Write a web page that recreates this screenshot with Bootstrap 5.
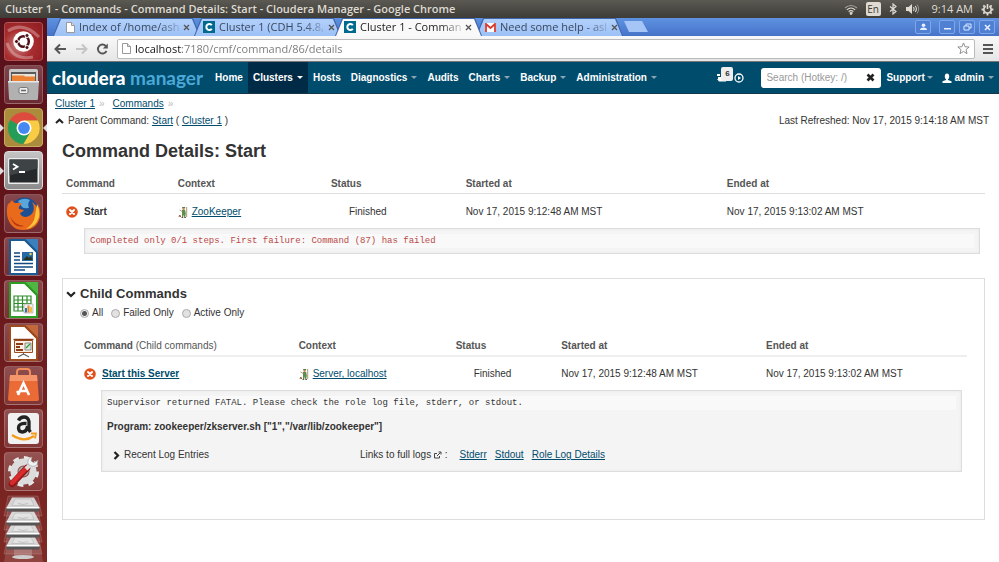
<!DOCTYPE html>
<html lang="en">
<head>
<meta charset="utf-8">
<meta name="viewport" content="width=device-width, initial-scale=1">
<title>Cluster 1 - Commands - Command Details: Start - Cloudera Manager</title>
<link href="https://cdn.jsdelivr.net/npm/bootstrap@5.3.0/dist/css/bootstrap.min.css" rel="stylesheet">
<style>
  :root { --ui: "Open Sans", "Noto Sans", sans-serif; --page: "Liberation Sans", Arial, sans-serif; --mono: "Liberation Mono", "Courier New", monospace; }
  body { font-family: var(--page); font-size: 10px; line-height: 14px; color: #333; background: #fff; }
  svg { display: block; flex: none; }
  button { font: inherit; }
  .plain-btn { border: 0; background: none; padding: 0; color: inherit; display: flex; }

  .sys-bar { height: 18px; padding: 0 5px; background: linear-gradient(#5b5952, #3d3c37); color: #dfdbd2; font-family: var(--ui); font-size: 11px; }
  .sys-title { font-weight: 600; }
  .sys-lang { background: #dfdbd2; color: #3d3c37; border-radius: 2px; width: 15px; height: 14px; font-size: 10px; }

  .launcher { width: 47px; padding: 4px 4px 0; gap: 4px; background: linear-gradient(#58101a, #66161b 45%, #7f2924); flex: none; }
  .tile { position: relative; width: 39px; height: 39px; border: 1px solid rgba(255,255,255,.2); border-radius: 4px; background: linear-gradient(rgba(255,255,255,.22), rgba(255,255,255,.1)); justify-content: center; align-items: center; flex: none; }
  .tile-ubuntu { background: radial-gradient(circle at 35% 60%, #c98080, #a92d2f 45%, #8c1c20); }
  .tile-chrome { background: #ab8b3c; border-color: #c9ac62; }
  .tile-term { background: linear-gradient(#c5c5c5, #8b8b8b); border-color: #ddd; }
  .run-left::before, .run-right::after { content: ""; position: absolute; top: 15px; border: 4px solid transparent; }
  .run-left::before { left: -5px; border-left-color: #ddd; border-right: 0; }
  .run-right::after { right: -5px; border-right-color: #ddd; border-left: 0; }
  .stack { margin: -3px -1px 0; }

  .tab-strip { height: 18px; padding-left: 6px; background: linear-gradient(#5e92e0, #4673c9); color: #3b475c; font-family: var(--ui); font-size: 11px; }
  .b-tab { position: relative; width: 147px; height: 18px; margin-right: -6px; padding: 0 11px 0 9px; z-index: 1; }
  .b-tab::before, .b-tab::after, .new-tab { clip-path: polygon(7px 0, calc(100% - 7px) 0, 100% 100%, 0 100%); }
  .b-tab::before, .b-tab::after { content: ""; position: absolute; z-index: -1; inset: 0; background: #3e66ad; }
  .b-tab::after { inset: 1px 1px 0; background: linear-gradient(#b2d0fb, #9dc1f6); }
  .b-tab.on { z-index: 2; color: #222; }
  .b-tab.on::after { background: #f9f9f9; }
  .b-tab span { white-space: nowrap; -webkit-mask-image: linear-gradient(90deg, #000 80%, rgba(0,0,0,.2)); mask-image: linear-gradient(90deg, #000 80%, rgba(0,0,0,.2)); }
  .new-tab { width: 24px; height: 11px; margin: 3px 0 0 7px; background: #a5c5f7; border: 0; clip-path: polygon(0 0, 18px 0, 100% 100%, 5px 100%); }
  .win-btn { width: 16px; height: 14px; border: 1px solid #7fa6e6; border-radius: 2px; background: #5080d4; padding: 0; display: flex; align-items: center; justify-content: center; }

  .tool-bar { height: 26px; padding: 0 6px 0 7px; background: linear-gradient(#f8f8f8, #e6e6e6); border-bottom: 1px solid #777; color: #555; }
  .url-box { height: 20px; border: 1px solid #bbb; border-radius: 2px; background: #fff; padding: 0 4px; }
  .url-box input { border: 0; outline: 0; padding: 0; height: 18px; font: 11px var(--ui); color: transparent; background: linear-gradient(90deg, #111 47px, #777 47px); -webkit-background-clip: text; background-clip: text; }

  .cm-nav { height: 32px; background: #004c6d; border-bottom: 1px solid #14384a; color: #fff; padding: 0 5px; font-weight: 700; }
  .cm-logo { font: 900 19px/28px Lato, sans-serif; color: #fff; text-decoration: none; margin-right: 7px; }
  .cm-logo span { color: #4ba9d8; font-weight: 700; }
  .cm-link { display: flex; align-items: center; gap: 4px; height: 31px; padding: 0 5px; color: #fff; text-decoration: none; }
  .cm-link.on { background: #002b46; }
  .cm-link.drop::after { content: ""; border: 3px solid transparent; border-top-color: #8aa6b4; border-bottom: 0; }
  .cm-link.on::after { border-top-color: #fff !important; }
  .tight.drop { gap: 2px; }
  .cm-search { width: 120px; height: 20px; background: #fff; border-radius: 3px; padding: 0 6px 0 5px; }
  .cm-search input { border: 0; outline: 0; padding: 0; min-width: 0; font: 10px var(--page); }
  .cm-search input::placeholder { color: #999; opacity: 1; }
  .cm-count { left: 5px; top: -2px; width: 12px; height: 14px; background: #eee; color: #333; border-radius: 2px; font-size: 8px; line-height: 14px; text-align: center; }

  .cm-main a { color: #004c6d; }
  .crumb-sep { color: #bbb; }
  .cm-main { padding: 1px 14px 0 15px; }
  .crumbs, .parent { margin-left: -7px; line-height: 17px; }
  .parent { margin-right: -4px; }
  h1 { font-size: 18px; line-height: 22px; font-weight: 700; margin: 11px 0 12px; }
  h2 { font-size: 13px; line-height: 16px; font-weight: 700; margin: 0; }
  .cmd-table { width: 100%; table-layout: fixed; margin: 0; }
  .cmd-table th { color: #555; padding: 3px 4px 2px; border-bottom: 1px solid #ddd; }
  .cmd-table td { padding: 11px 4px 9px; }
  .cmd-table td.state { padding-left: 22px; }
  .cmd-table td.detail { padding: 0 5px 0 22px; }
  .name-cell { gap: 6px; }
  .o1 { width: 12.1%; } .o2 { width: 16.6%; } .o3 { width: 14.6%; } .o4 { width: 28.3%; }
  .i1 { width: 24.2%; } .i2 { width: 17.7%; } .i3 { width: 11.9%; } .i4 { width: 23.1%; }
  .msg { background: #f4f4f4; border: 1px solid #ddd; padding: 5px; box-shadow: inset 0 0 3px rgba(0,0,0,.06); }
  .msg pre { font: 9px/14px var(--mono); margin: 0; background: #f9f9f9; overflow: hidden; color: #333; }
  .msg pre.err { color: #b94a48; }
  .program { margin-top: 10px; }
  .child { border: 1px solid #ddd; margin-top: 24px; padding: 7px 17px 47px; }
  .child-head { margin-left: -14px; }
  .child .cmd-table th { border-bottom: 2px solid #eee; }
  .child .cmd-table td { padding-top: 10px; }
  .child .cmd-table td.detail { padding-top: 0; padding-left: 21px; }
  .filters { gap: 8px; margin: 4px 0 16px; }
  .filters input { appearance: none; width: 9px; height: 9px; margin: 0; border: 1px solid #aaa; border-radius: 50%; background: #e2e2e2; }
  .filters input:checked { background: radial-gradient(#555 0 2px, #eee 3px); }
  .filters label { display: flex; align-items: center; gap: 3px; }
  .logs { padding: 14px 8px 4px 6px; }
  .logs > :first-child { width: 247px; }
</style>
</head>
<body>
<svg width="0" height="0" class="position-absolute" aria-hidden="true">
  <symbol id="fail" viewBox="0 0 12 12"><circle cx="6" cy="6" r="5.8" fill="#e3501c"/><path d="M4 4l4 4M8 4l-4 4" stroke="#fff" stroke-width="2" stroke-linecap="round"/></symbol>
  <symbol id="keeper" viewBox="0 0 10 12"><path d="M4 4h3.200l.6 3.500-.5 3.500H6.200L5.800 8.500l-.6 2.500H4z" fill="#5d8f4a"/><circle cx="5.600" cy="2.700" r="1.300" fill="#b98a5b"/><path d="M4.200 1.500h3" stroke="#4c6b35" stroke-width=".9"/><path d="M8.700 1v10" stroke="#8a6a45" stroke-width=".7"/><path d="M1.500 4l2.700 1.500" stroke="#a98a65" stroke-width=".8"/><path d="M1 11l.8-2 1 2" stroke="#a0522d" fill="none"/><path d="M3.500 11.500h1.700M6.200 11.500H8" stroke="#333" stroke-width=".8"/></symbol>
  <symbol id="sheet" viewBox="0 0 9 11"><path d="M.5.5h5l3 3v7h-8z" fill="#fff" stroke="#999"/><path d="M5.500.5v3h3" fill="#ddd" stroke="#999"/></symbol>
  <symbol id="close" viewBox="0 0 7 7"><path d="M1 1l5 5M6 1L1 6" stroke="#555" stroke-width="1.300"/></symbol>
  <symbol id="cfav" viewBox="0 0 12 12"><path fill="#006a8e" d="M0 0h12v12H0z"/><path d="M8.800 4.300A3 3 0 1 0 8.800 7.700" fill="none" stroke="#fff" stroke-width="2"/></symbol>
  <symbol id="disk" viewBox="0 0 40 22"><path d="M5 1h30l4 20H1z" fill="#fff" fill-opacity=".1" stroke="#fff" stroke-opacity=".15"/><path d="M9 2.500h22l5.500 10h-33z" fill="#d4d4d4"/><path d="M12 4h16l3 6.500H9z" fill="#dfdfdf" stroke="#b4b4b4" stroke-width=".6"/><path d="M15 8.500q5 2 10 0" stroke="#aaa" fill="none" stroke-width=".6"/><path d="M3.500 12.500h33v3l-1 1h-31l-1-1z" fill="#555"/><path d="M3.500 12h33v1.500h-33z" fill="#fff"/></symbol>
</svg>

<div class="d-flex flex-column min-vh-100">
  <header class="sys-bar d-flex align-items-center justify-content-between">
    <div class="sys-title">Cluster 1 - Commands - Command Details: Start - Cloudera Manager - Google Chrome</div>
    <div class="d-flex align-items-center">
      <svg class="me-2" width="14" height="11" viewBox="0 0 14 11" fill="none" stroke="#dfdbd2" stroke-width="1.100"><path d="M1 4Q7-1 13 4" opacity=".6"/><path d="M2.800 5.800Q7 2.200 11.200 5.800M4.600 7.600Q7 5.600 9.400 7.600"/><path d="M5.800 9L7 10.500 8.200 9Q7 8 5.800 9" fill="#dfdbd2"/></svg>
      <span class="sys-lang d-flex align-items-center justify-content-center me-2">En</span>
      <svg class="me-2" width="8" height="12" viewBox="0 0 8 12" fill="none" stroke="#dfdbd2" stroke-width="1.200"><path d="M1 3.500l6 5L4 11V1l3 2.500-6 5"/></svg>
      <svg class="me-2" width="15" height="12" viewBox="0 0 15 12"><path d="M1 4h2.500L7 1v10L3.500 8H1z" fill="#dfdbd2"/><path d="M8.500 4q1.400 2 0 4M10.300 3q2.200 3 0 6" fill="none" stroke="#dfdbd2" stroke-width="1.100"/><path d="M12 1.500q3.400 4.500 0 9" fill="none" stroke="#dfdbd2" opacity=".5"/></svg>
      <span class="mx-1">9:14 AM</span>
      <svg class="ms-1" width="13" height="13" viewBox="0 0 13 13" fill="none" stroke="#dfdbd2"><path d="M4.800 3.200a3.700 3.700 0 1 0 3.400 0" stroke-width="1.700"/><path d="M6.500 1v5" stroke-width="1.600"/><path d="M2.300 2.300l1.200 1.200M10.700 2.300L9.500 3.500M.6 6.500h1.700M12.400 6.500h-1.700M2.300 10.700l1.200-1.200M10.700 10.700L9.500 9.500M6.500 12.500v-2" stroke-width="1.800"/></svg>
    </div>
  </header>

  <div class="d-flex flex-grow-1">
    <aside class="launcher d-flex flex-column" aria-label="Launcher">
      <button class="plain-btn tile tile-ubuntu" aria-label="Search"><svg width="37" height="37" viewBox="0 0 37 37"><path d="M3 8Q18-2 34 14M2 20Q8 38 28 34" fill="none" stroke="#fff" stroke-opacity=".3" stroke-width="3"/><circle cx="18.500" cy="18.500" r="10.300" fill="#fff"/><circle cx="18.500" cy="18.500" r="5.300" fill="none" stroke="#4f1017" stroke-width="2.500"/><path d="M18.500 18.500L9 18.500M18.500 18.500l5-8.500M18.500 18.500l5 8.500" stroke="#fff" stroke-width="1.300"/><g fill="#4f1017" stroke="#fff" stroke-width=".9"><circle cx="11.500" cy="18.500" r="2"/><circle cx="22" cy="12.500" r="2"/><circle cx="22" cy="24.500" r="2"/></g><circle cx="18.500" cy="18.500" r="3.600" fill="#fff"/></svg></button>
      <button class="plain-btn tile" aria-label="Files"><svg width="37" height="37" viewBox="0 0 37 37"><rect x="4" y="3" width="29" height="31" rx="2" fill="#c9c9c9"/><path d="M6 6h25v9H6z" fill="#5a5a5a"/><path d="M7 8h23v7H7z" fill="#e9e4da"/><path d="M7 9.500h12l1 1h10V15H7z" fill="#ee8233"/><path d="M3 15h31l-1 17q0 2-2 2H6q-2 0-2-2z" fill="#b1b1b1"/><path d="M3 15h31v1.500H3z" fill="#e8e8e8"/><rect x="14" y="21.500" width="9" height="6" rx="1.500" fill="#eee" stroke="#777"/><path d="M16 24.500h5" stroke="#666" stroke-width="1.500"/></svg></button>
      <button class="plain-btn tile tile-chrome run-left run-right" aria-label="Chrome"><svg width="34" height="34" viewBox="0 0 34 34"><path d="M17 17L3.100 9A16 16 0 0 1 30.900 9.500H17z" fill="#dd4b3e"/><path d="M17 17L3.100 9A16 16 0 0 0 16.500 33L23.500 21z" fill="#239d58"/><path d="M17 9.500h13.900A16 16 0 0 1 16.500 33L23.500 21z" fill="#f9cc45"/><circle cx="17" cy="17" r="7.500" fill="#fff"/><circle cx="17" cy="17" r="5.900" fill="#4688f1"/></svg></button>
      <button class="plain-btn tile tile-term run-left" aria-label="Terminal"><svg width="37" height="37" viewBox="0 0 37 37"><rect x="3" y="6" width="31" height="26" rx="1.500" fill="#eee"/><rect x="4.500" y="7.500" width="28" height="23" fill="#25292b"/><path d="M4.500 7.500h28v9l-28 7z" fill="#3e4345"/><path d="M8 12l4.500 2.700L8 17.500M14 20h6" fill="none" stroke="#fff" stroke-width="1.800"/></svg></button>
      <button class="plain-btn tile" aria-label="Firefox"><svg width="35" height="35" viewBox="0 0 35 35"><circle cx="18.500" cy="15.500" r="14" fill="#1c4f94"/><path d="M12 5q6-4 12-1-3 4-1 8-5 1-7-1z" fill="#57a7dc"/><path d="M2 8Q4 7 6 4q1 3 4 3 4-1 6 1-4 2-3 5l5 1q-1 2-4 3 1 4 6 4 5-1 7-5 2-5-1-10 5 3 5 8 2-2 1-6 3 6 2 13-3 13-17 13Q5 34 1.500 21 0 14 2 8z" fill="#ea6a1c"/><path d="M31 8q3 6 2 13-3 10-13 12 8-5 9-13z" fill="#fdc63a"/><path d="M4 20q4 9 14 10-10 3-14-10z" fill="#b93415"/></svg></button>
      <button class="plain-btn tile" aria-label="Writer"><svg width="31" height="36" viewBox="0 0 31 36"><path d="M2 1h15l12 12v22H2z" fill="#fff" stroke="#1a5a92" stroke-width="2"/><path d="M17 0h13v13z" fill="#3b80bd"/><path d="M17 1l12 12" stroke="#1a5a92" stroke-width="2"/><path d="M6 14h6M6 17.500h6M6 21h6M6 24.500h19M6 28h19M6 31h11" stroke="#104a80" stroke-width="1.700"/><path d="M14 13h11v9H14z" fill="#256aa5"/><path d="M15 21l4-4 2 2 2-2 1.500 4z" fill="#26341f"/><circle cx="22.500" cy="15" r="1.200" fill="#f2d552"/></svg></button>
      <button class="plain-btn tile" aria-label="Calc"><svg width="31" height="36" viewBox="0 0 31 36"><path d="M2 1h15l12 12v22H2z" fill="#fff" stroke="#2c9c22" stroke-width="2"/><path d="M17 0h13v13z" fill="#4fb643"/><path d="M17 1l12 12" stroke="#2c9c22" stroke-width="2"/><path d="M6 14h17v15H6zM6 18h17M6 21.500h17M6 25h17M10 14v15M14.500 14v15M19 14v15" fill="none" stroke="#2c8c28" stroke-width="1.200"/><path d="M16 22h9v9h-9z" fill="#eee" stroke="#aaa" stroke-width=".7"/><path d="M17 26h2v4.500h-2z" fill="#2c73b3"/><path d="M19.500 23.500h2v7h-2z" fill="#e8872a"/><path d="M22 25h2v5.500h-2z" fill="#f0c040"/></svg></button>
      <button class="plain-btn tile" aria-label="Impress"><svg width="31" height="36" viewBox="0 0 31 36"><path d="M2 1h15l12 12v22H2z" fill="#fff" stroke="#9c4a1e" stroke-width="2"/><path d="M17 0h13v13z" fill="#c2683a"/><path d="M17 1l12 12" stroke="#9c4a1e" stroke-width="2"/><path d="M6.500 15.500h18v12h-18z" fill="#fbeee4" stroke="#a04e20"/><path d="M5.500 14.500h20" stroke="#8a3c14" stroke-width="1.500"/><path d="M8 19h7M8 22h4M8 25h7" stroke="#8a3c14" stroke-width="2"/><path d="M17 18h6v7h-6z" fill="#dfeadb" stroke="#777" stroke-width=".8"/><path d="M18 23l4-4" stroke="#2f9a3b" stroke-width="1.300"/><path d="M15.500 28v2M10 32l5.500-3 5.500 3" stroke="#666" stroke-width="1.200" fill="none"/></svg></button>
      <button class="plain-btn tile" aria-label="Software Center"><svg width="35" height="37" viewBox="0 0 35 37"><path d="M11 11V5q0-3 3-3h7q3 0 3 3v6" fill="none" stroke="#f08c5a" stroke-width="2"/><path d="M4 8h27l2 24q0 2-2 2H4q-2 0-2-2z" fill="#ea6b35"/><path d="M4 8h27l.5 6H3.500z" fill="#f4956a"/><path d="M12 28l5.500-12L23 28M14 24h7M10.500 25h3" fill="none" stroke="#fff" stroke-width="2.600"/></svg></button>
      <button class="plain-btn tile" aria-label="Amazon"><svg width="33" height="33" viewBox="0 0 33 33"><rect x="1" y="1" width="31" height="31" rx="3" fill="#f1f1f1"/><path d="M11.500 8.500Q13 5 17 5t5 4.500V18l1.500 2M19.500 11.500q-8-.5-8 4.500 0 4 4 4 4.500-.5 5-6" fill="none" stroke="#222" stroke-width="3.300"/><path d="M5 23q12 8 22 1" fill="none" stroke="#f49b1c" stroke-width="2.200"/><path d="M24 21.500h5l-1 5" fill="none" stroke="#f49b1c" stroke-width="1.800"/></svg></button>
      <button class="plain-btn tile" aria-label="System Settings"><svg width="37" height="37" viewBox="0 0 37 37"><circle cx="18.500" cy="18.500" r="13.500" fill="none" stroke="#e6e6e6" stroke-width="4" stroke-dasharray="5.600 5"/><circle cx="18.500" cy="18.500" r="9.500" fill="none" stroke="#dcdcdc" stroke-width="7"/><circle cx="18.500" cy="18.500" r="5" fill="#aaa"/><path d="M7 31L22 15" stroke="#8e1518" stroke-width="6.500" stroke-linecap="round"/><path d="M7 30L21 15.500" stroke="#d92b2b" stroke-width="4.500" stroke-linecap="round"/><path d="M21 16l5-5" stroke="#ddd" stroke-width="4"/><path d="M27 4q-5 1-4 7 4 4 9 1l1-5-4 3-3-2z" fill="#f2f2f2" stroke="#999" stroke-width=".6"/></svg></button>
      <div class="stack d-flex flex-column flex-grow-1">
        <svg width="41" height="70" viewBox="0 0 41 70"><path d="M4 52h33l3 18H1z" fill="#fff" opacity=".13"/><path d="M11 54h18v10H11z" fill="#fff" opacity=".2"/><ellipse cx="20" cy="65" rx="11" ry="2" fill="#ccc"/><use href="#disk" y="41" width="40" height="22"/><use href="#disk" y="29" width="40" height="22"/><use href="#disk" y="17" width="40" height="22"/><use href="#disk" y="3" width="40" height="22"/></svg>
      </div>
    </aside>

    <div class="flex-grow-1 d-flex flex-column">
      <div class="tab-strip d-flex">
        <div class="b-tab d-flex align-items-center gap-1"><svg class="ms-1" width="9" height="11"><use href="#sheet"/></svg><span>Index of /home/ash</span><button class="plain-btn ms-auto" aria-label="Close tab"><svg width="7" height="7"><use href="#close"/></svg></button></div>
        <div class="b-tab d-flex align-items-center gap-1"><svg width="12" height="12"><use href="#cfav"/></svg><span>Cluster 1 (CDH 5.4.8,</span><button class="plain-btn ms-auto" aria-label="Close tab"><svg width="7" height="7"><use href="#close"/></svg></button></div>
        <div class="b-tab on d-flex align-items-center gap-1"><svg width="12" height="12"><use href="#cfav"/></svg><span>Cluster 1 - Comman</span><button class="plain-btn ms-auto" aria-label="Close tab"><svg width="7" height="7"><use href="#close"/></svg></button></div>
        <div class="b-tab d-flex align-items-center gap-1"><svg width="11" height="9" viewBox="0 0 11 9"><path fill="#fff" d="M0 0h11v9H0z"/><path d="M1 9V1l4.500 4L10 1v8" fill="none" stroke="#d93a2f" stroke-width="1.800"/></svg><span>Need some help - asl</span><button class="plain-btn ms-auto" aria-label="Close tab"><svg width="7" height="7"><use href="#close"/></svg></button></div>
        <button class="new-tab" aria-label="New tab"></button>
        <div class="d-flex ms-auto me-1 gap-1 align-items-center">
          <button class="win-btn me-1" aria-label="Profile"><svg width="9" height="8" viewBox="0 0 9 8" fill="#e8f0ff"><circle cx="4.500" cy="2.300" r="1.800"/><path d="M1 7q0-2.500 3.500-2.500T8 7z"/></svg></button>
          <button class="win-btn" aria-label="Minimize"><svg width="7" height="7"><path d="M0 4h7v1.500H0z" fill="#e8f0ff"/></svg></button>
          <button class="win-btn" aria-label="Restore"><svg width="9" height="8" viewBox="0 0 9 8" fill="none" stroke="#dce8ff"><path d="M3 3V1h5v4H6M1 3h5v4H1z"/></svg></button>
          <button class="win-btn" aria-label="Close"><svg width="7" height="7" viewBox="0 0 7 7"><path d="M1 1l5 5M6 1L1 6" stroke="#e8f0ff" stroke-width="1.500"/></svg></button>
        </div>
      </div>

      <div class="tool-bar d-flex align-items-center">
        <div class="d-flex gap-2 me-2">
          <button class="plain-btn" aria-label="Back"><svg width="13" height="12" viewBox="0 0 13 12"><path d="M6 1.500L1.500 6 6 10.500M1.500 6H12" fill="none" stroke="#555" stroke-width="2"/></svg></button>
          <button class="plain-btn" aria-label="Forward"><svg width="13" height="12" viewBox="0 0 13 12"><path d="M7 1.500L11.500 6 7 10.500M11.500 6H1" fill="none" stroke="#c4c4c4" stroke-width="2"/></svg></button>
          <button class="plain-btn" aria-label="Reload"><svg width="13" height="12" viewBox="0 0 13 12"><path d="M10.500 8A4.500 4.500 0 1 1 9.800 3" fill="none" stroke="#555" stroke-width="1.900"/><path d="M11.800.5V5.500H6.800z" fill="#555"/></svg></button>
        </div>
        <div class="url-box d-flex align-items-center flex-grow-1 gap-1">
          <svg width="9" height="11"><use href="#sheet"/></svg>
          <input class="flex-grow-1" type="text" value="localhost:7180/cmf/command/86/details" aria-label="Address">
          <svg width="13" height="13" viewBox="0 0 14 14"><path d="M7 1l1.700 4.100 4.400.3-3.400 2.800 1.100 4.300L7 10.200l-3.800 2.300 1.100-4.300L.9 5.400l4.400-.3z" fill="#fff" stroke="#888"/></svg>
        </div>
        <button class="plain-btn ms-2" aria-label="Menu"><svg width="10" height="10"><path d="M0 0h10v2H0zM0 4h10v2H0zM0 8h10v2H0z" fill="#555"/></svg></button>
      </div>

      <nav class="cm-nav d-flex align-items-center">
        <a class="cm-logo" href="#">cloudera <span>manager</span></a>
        <a class="cm-link" href="#">Home</a>
        <a class="cm-link drop on" href="#">Clusters</a>
        <a class="cm-link" href="#">Hosts</a>
        <a class="cm-link drop" href="#">Diagnostics</a>
        <a class="cm-link" href="#">Audits</a>
        <a class="cm-link drop" href="#">Charts</a>
        <a class="cm-link drop" href="#">Backup</a>
        <a class="cm-link drop" href="#">Administration</a>
        <div class="d-flex align-items-center ms-auto">
          <a class="position-relative me-3" href="#" aria-label="6 running commands"><svg width="29" height="18" viewBox="0 0 29 18"><path d="M1 5h3v2H1zM2 8h4v3H2zM1 10h9v2.500H3z" fill="#fff"/><circle cx="23" cy="9" r="4" fill="none" stroke="#fff" stroke-width="1.300"/><path d="M22 7l3 2-3 2z" fill="#fff"/></svg><span class="cm-count position-absolute">6</span></a>
          <div class="cm-search d-flex align-items-center"><input class="flex-grow-1" type="text" placeholder="Search (Hotkey: /)" aria-label="Search"><button class="plain-btn" aria-label="Clear"><svg width="9" height="9" viewBox="0 0 9 9"><path d="M1.500 1.500l6 6M7.500 1.500l-6 6" stroke="#222" stroke-width="2.600"/></svg></button></div>
          <a class="cm-link drop tight" href="#">Support</a>
          <a class="cm-link drop px-0 ms-1" href="#"><span class="d-flex align-items-center"><svg width="10" height="10" viewBox="0 0 10 10" fill="#fff"><ellipse cx="5" cy="3.500" rx="2.200" ry="3"/><path d="M4 5h2v2l3.500 1.200V10H.5V8.200L4 7z"/></svg>&nbsp;admin</span></a>
        </div>
      </nav>

      <main class="cm-main">
        <div class="crumbs d-flex gap-1"><a href="#">Cluster 1</a><span class="crumb-sep me-1">»</span><a href="#">Commands</a><span class="crumb-sep">»</span></div>
        <div class="parent d-flex justify-content-between">
          <div class="d-flex align-items-center gap-1"><svg width="9" height="6" viewBox="0 0 9 6"><path d="M1 5l3.500-3.300L8 5" fill="none" stroke="#222" stroke-width="2"/></svg><span>Parent Command: <a href="#">Start</a> ( <a href="#">Cluster 1</a> )</span></div>
          <div>Last Refreshed: Nov 17, 2015 9:14:18 AM MST</div>
        </div>
        <h1>Command Details: Start</h1>
        <table class="cmd-table">
          <thead><tr><th class="o1">Command</th><th class="o2">Context</th><th class="o3">Status</th><th class="o4">Started at</th><th>Ended at</th></tr></thead>
          <tbody>
            <tr><td><div class="name-cell d-flex align-items-center"><svg width="12" height="12"><use href="#fail"/></svg><b>Start</b></div></td><td><div class="d-flex align-items-center gap-1"><svg width="10" height="12"><use href="#keeper"/></svg><a href="#">ZooKeeper</a></div></td><td class="state">Finished</td><td>Nov 17, 2015 9:12:48 AM MST</td><td>Nov 17, 2015 9:13:02 AM MST</td></tr>
            <tr><td class="detail" colspan="5"><div class="msg"><pre class="err">Completed only 0/1 steps. First failure: Command (87) has failed</pre></div></td></tr>
          </tbody>
        </table>

        <section class="child">
          <div class="child-head d-flex align-items-center gap-1"><svg width="10" height="7" viewBox="0 0 9 6"><path d="M1 1l3.500 3.300L8 1" fill="none" stroke="#222" stroke-width="2"/></svg><h2>Child Commands</h2></div>
          <div class="filters d-flex">
            <label><input type="radio" name="f" checked>All</label>
            <label><input type="radio" name="f">Failed Only</label>
            <label><input type="radio" name="f">Active Only</label>
          </div>
          <table class="cmd-table">
            <thead><tr><th class="i1">Command <span class="fw-normal">(Child commands)</span></th><th class="i2">Context</th><th class="i3">Status</th><th class="i4">Started at</th><th>Ended at</th></tr></thead>
            <tbody>
              <tr><td><div class="name-cell d-flex align-items-center"><svg width="12" height="12"><use href="#fail"/></svg><a class="fw-bold" href="#">Start this Server</a></div></td><td><div class="d-flex align-items-center gap-1"><svg width="10" height="12"><use href="#keeper"/></svg><a href="#">Server, localhost</a></div></td><td class="state">Finished</td><td>Nov 17, 2015 9:12:48 AM MST</td><td>Nov 17, 2015 9:13:02 AM MST</td></tr>
              <tr><td class="detail" colspan="5"><div class="msg">
                <pre>Supervisor returned FATAL. Please check the role log file, stderr, or stdout.</pre>
                <div class="program fw-bold">Program: zookeeper/zkserver.sh ["1","/var/lib/zookeeper"]</div>
                <div class="logs d-flex align-items-center">
                  <div class="d-flex align-items-center gap-1"><svg width="7" height="9" viewBox="0 0 7 9"><path d="M1.500 1L5 4.500 1.500 8" fill="none" stroke="#222" stroke-width="2.200"/></svg>Recent Log Entries</div>
                  <div class="d-flex align-items-center gap-2"><span class="d-flex align-items-center me-1">Links to full logs&nbsp;<svg width="8" height="8" viewBox="0 0 8 8" fill="none" stroke="#444"><path d="M5.500 5v2h-5V2.500h2.500M3 5l3.500-3.500M4.500 1H7v2.500"/></svg>&nbsp;:</span><a href="#">Stderr</a><a href="#">Stdout</a><a href="#">Role Log Details</a></div>
                </div>
              </div></td></tr>
            </tbody>
          </table>
        </section>
      </main>
    </div>
  </div>
</div>
<script src="https://cdn.jsdelivr.net/npm/bootstrap@5.3.0/dist/js/bootstrap.bundle.min.js"></script>
</body>
</html>
